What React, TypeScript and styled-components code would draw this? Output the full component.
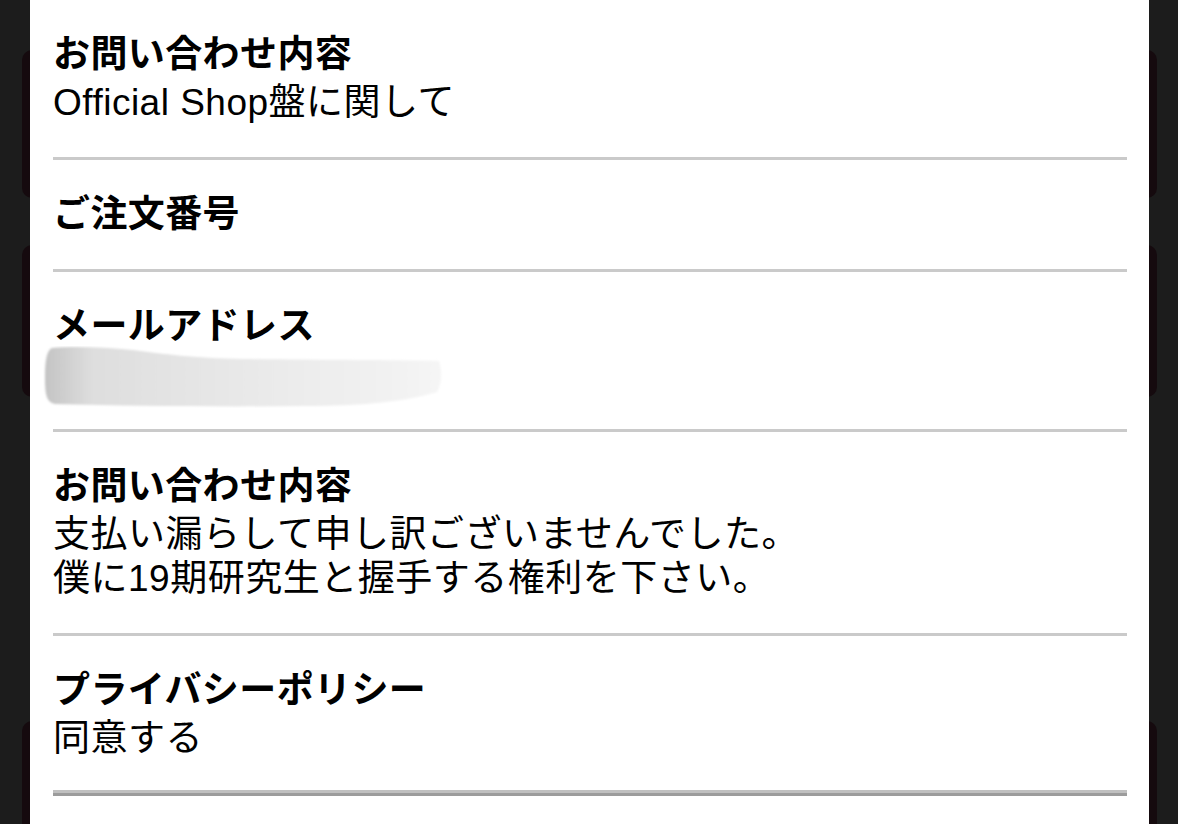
import React from 'react';
import styled, { createGlobalStyle } from 'styled-components';

type Field = {
  label: string;
  lines?: string[];
  masked?: boolean;
};

const fields: Field[] = [
  { label: 'お問い合わせ内容', lines: ['Official Shop盤に関して'] },
  { label: 'ご注文番号' },
  { label: 'メールアドレス', masked: true },
  {
    label: 'お問い合わせ内容',
    lines: ['支払い漏らして申し訳ございませんでした。', '僕に19期研究生と握手する権利を下さい。'],
  },
  { label: 'プライバシーポリシー', lines: ['同意する'] },
];

const GlobalStyle = createGlobalStyle`
  html, body {
    margin: 0;
    padding: 0;
    background: #1c1c1c;
  }
  body {
    font-family: "Liberation Sans", "Noto Sans CJK JP", sans-serif;
    color: #000;
  }
`;

const Screen = styled.div`
  position: relative;
  width: 1178px;
  height: 824px;
  overflow: hidden;
  background: #1c1c1c;
`;

// the page behind the dialog, only a sliver of it shows on each side
const Backdrop = styled.div`
  display: flex;
  flex-direction: column;
  padding: 50px 21px 0 22px;
`;

const BackCard = styled.div<{ $h: number; $mt?: number }>`
  height: ${({ $h }) => $h}px;
  margin-top: ${({ $mt = 0 }) => $mt}px;
  border-radius: 10px;
  background: #150a0e;
`;

const Modal = styled.div`
  position: absolute;
  top: 0;
  bottom: 0;
  left: 30px;
  width: 1119px;
  background: #fff;
  padding: 0 22px 0 23px;
  box-sizing: border-box;
`;

const Row = styled.div<{ $last?: boolean }>`
  padding: 33px 0 32px;
  border-bottom: 3px solid #cacaca;
  ${({ $last }) =>
    $last &&
    `
    border-bottom: 3px solid #9c9c9c;
    box-shadow: inset 0 -3px 0 #c0c0c0;
  `}
`;

const Label = styled.div`
  height: 44px;
  font-size: 37px;
  font-weight: 700;
  line-height: 44px;
  letter-spacing: 0.4px;
  white-space: nowrap;
`;

const Value = styled.div`
  height: 44px;
  font-size: 37px;
  font-weight: 400;
  line-height: 44px;
  letter-spacing: 0.5px;
  white-space: nowrap;

  &:nth-child(2) {
    margin-top: 4px;
  }
`;

const Smudge = styled.svg`
  display: block;
  margin: -3px 0 -11px -10px;
`;

const MaskedValue = () => (
  <Smudge width="400" height="62" viewBox="0 0 400 62">
    <defs>
      <linearGradient id="smudge" x1="0" x2="1" y1="0" y2="0">
        <stop offset="0" stopColor="#c4c4c4" />
        <stop offset="0.12" stopColor="#dedede" />
        <stop offset="0.6" stopColor="#ebebeb" />
        <stop offset="1" stopColor="#f5f5f5" />
      </linearGradient>
      <filter id="soft" x="-5%" y="-20%" width="110%" height="140%">
        <feGaussianBlur stdDeviation="1" />
      </filter>
    </defs>
    <path
      d="M9 2 C30 0 60 1 90 4 C120 8 150 12 200 13 C280 14 350 14 396 15 C399 24 399 38 394 46 C360 56 320 60 260 60 C180 61 90 60 12 58 C3 56 2 48 2 30 C2 14 4 4 9 2 Z"
      fill="url(#smudge)"
      filter="url(#soft)"
    />
  </Smudge>
);

export default function App() {
  return (
    <>
      <GlobalStyle />
      <Screen>
        <Backdrop>
          <BackCard $h={148} />
          <BackCard $h={152} $mt={47} />
          <BackCard $h={120} $mt={324} />
        </Backdrop>
        <Modal>
          {fields.map((field, i) => (
            <Row key={i} $last={i === fields.length - 1}>
              <Label>{field.label}</Label>
              {field.masked && <MaskedValue />}
              {field.lines?.map((line, j) => (
                <Value key={j}>{line}</Value>
              ))}
            </Row>
          ))}
        </Modal>
      </Screen>
    </>
  );
}
